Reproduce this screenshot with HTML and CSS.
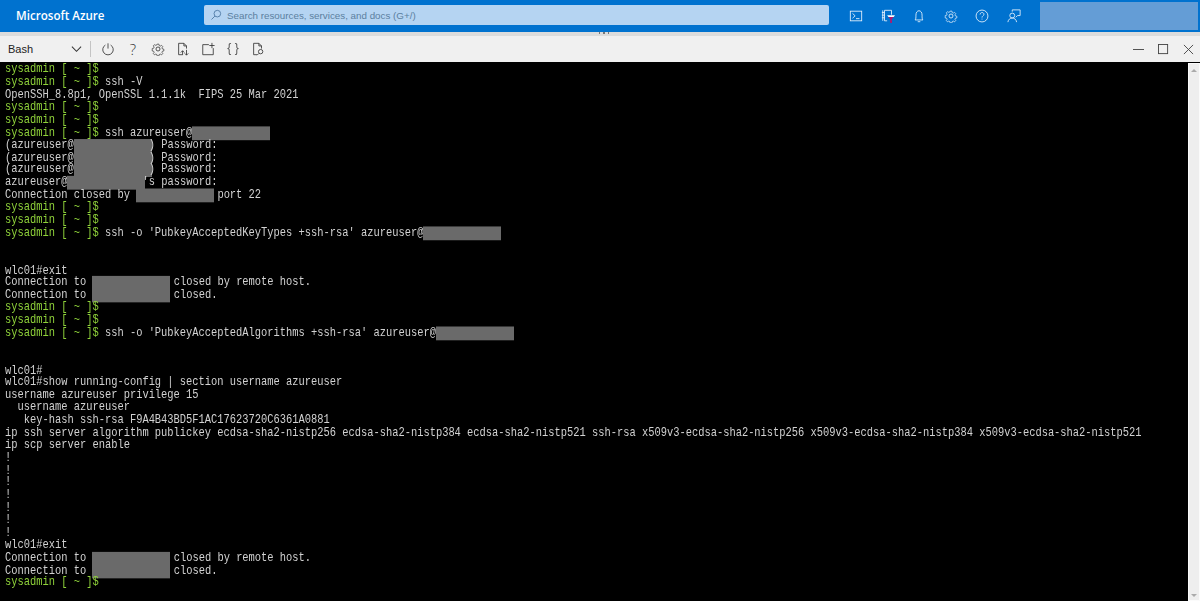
FILE: index.html
```html
<!DOCTYPE html>
<html lang="en">
<head>
<meta charset="utf-8">
<title>Microsoft Azure</title>
<link rel="stylesheet" href="styles.css">
</head>
<body>
<header class="topbar">
  <div class="brand">Microsoft Azure</div>
  <div class="search">
    <svg class="search-icon" viewBox="0 0 16 16"><circle cx="9.8" cy="6.2" r="4.4"/><path d="M6.6 9.4 2 14"/></svg>
    <span>Search resources, services, and docs (G+/)</span>
  </div>
  <nav class="top-icons">
    <svg class="ti" viewBox="0 0 16 16"><rect x="1.5" y="2.500" width="13" height="11"/><path d="M4 5l3 2.800L4 10.500M8 11h4"/></svg>
    <svg class="ti" viewBox="0 0 16 16"><path d="M4 1.500h8v5M7 13.500H4v-12M2 1.500v12M1 4h3M1 7h3M1 10h3"/><path class="funnel-top" d="M7 7h9l-1.500 2h-6z"/><path class="funnel" d="M8.500 9h6l-2 2.500V16h-2v-4.500z"/></svg>
    <svg class="ti" viewBox="0 0 16 16"><path d="M3.500 12.500c1-1 1-2.500 1-5.500s1.500-5 3.500-5 3.500 2 3.500 5 0 4.500 1 5.500zM6.500 14.500h3"/></svg>
    <svg class="ti" viewBox="0 0 16 16"><path d="M6.800 1.500h2.400l.4 2 1.500.7 1.800-1 1.600 1.700-1.100 1.700.6 1.500 2 .4v2.400l-2 .4-.6 1.500 1.100 1.700-1.600 1.700-1.800-1-1.500.6-.4 2H6.800l-.4-2-1.500-.6-1.800 1-1.600-1.700 1.100-1.700-.6-1.500-2-.4V7.500l2-.4.600-1.500-1.100-1.700 1.600-1.700 1.800 1 1.500-.7z" transform="translate(1.400 1.200) scale(.83)"/><circle cx="8" cy="8" r="2.300"/></svg>
    <svg class="ti" viewBox="0 0 16 16"><circle cx="8" cy="8" r="6.800"/><path d="M5.800 6.300c0-3 4.400-3 4.400-.2 0 1.800-2.200 1.700-2.200 3.700M8 11v1"/></svg>
    <svg class="ti" viewBox="0 0 16 16"><circle cx="6" cy="7.500" r="2.800"/><path d="M1 15c.5-3 2.500-4.700 5-4.700s4.500 1.700 5 4.700M6 3V1h9v6.500h-3l-2 2"/></svg>
  </nav>
  <div class="account"></div>
</header>
<div class="divider"><div class="grip"><i></i><i></i><i></i></div></div>
<div class="toolbar">
  <div class="shell-select">
    <span>Bash</span>
    <svg class="chev" viewBox="0 0 12 8"><path d="M1 1.500l5 5 5-5"/></svg>
  </div>
  <div class="sep"></div>
  <div class="tools">
    <svg class="tool" viewBox="0 0 16 16"><path d="M5 3.500a6 6 0 1 0 6 0M8 1.500v6"/></svg>
    <span class="tool q">?</span>
    <svg class="tool" viewBox="0 0 16 16"><path d="M6.800 1.500h2.400l.4 2 1.500.7 1.800-1 1.600 1.700-1.100 1.700.6 1.500 2 .4v2.400l-2 .4-.6 1.500 1.100 1.700-1.600 1.700-1.800-1-1.500.6-.4 2H6.800l-.4-2-1.500-.6-1.800 1-1.600-1.700 1.100-1.700-.6-1.500-2-.4V7.500l2-.4.600-1.500-1.100-1.700 1.600-1.700 1.800 1 1.500-.7z" transform="translate(1.400 1.200) scale(.83)"/><circle cx="8" cy="8" r="2.300"/></svg>
    <svg class="tool" viewBox="0 0 16 16"><path d="M7 14.500H3v-13h6l3 3v3M9 1.500v3h3M12 9v6M10 13l2 2 2-2M7.500 15v-5M5.500 12l2-2 2 2"/></svg>
    <svg class="tool" viewBox="0 0 16 16"><path d="M9 3H2v11.500h12V7M12.500 1v6M9.500 4h6"/></svg>
    <span class="tool brace">{ }</span>
    <svg class="tool" viewBox="0 0 16 16"><path d="M7 14.500H3v-13h6l3 3v3M9 1.500v3h3"/><circle cx="11" cy="11" r="2.500"/><path d="M9 13l-2 2"/></svg>
  </div>
  <div class="win-controls">
    <svg class="win" viewBox="0 0 12 12"><path d="M0 6h12"/></svg>
    <svg class="win" viewBox="0 0 12 12"><rect x=".5" y=".5" width="10" height="10"/></svg>
    <svg class="win" viewBox="0 0 12 12"><path d="M1 1l10 10M11 1 1 11"/></svg>
  </div>
</div>
<main class="terminal">
  <pre class="output"><span class="p">sysadmin [ ~ ]$</span>
<span class="p">sysadmin [ ~ ]$</span> ssh -V
OpenSSH_8.8p1, OpenSSL 1.1.1k  FIPS 25 Mar 2021
<span class="p">sysadmin [ ~ ]$</span>
<span class="p">sysadmin [ ~ ]$</span>
<span class="p">sysadmin [ ~ ]$</span> ssh azureuser@<span class="r"></span>
(azureuser@<span class="r"></span>) Password:
(azureuser@<span class="r"></span>) Password:
(azureuser@<span class="r"></span>) Password:
azureuser@<span class="r"></span>'s password:
Connection closed by <span class="r"></span> port 22
<span class="p">sysadmin [ ~ ]$</span>
<span class="p">sysadmin [ ~ ]$</span>
<span class="p">sysadmin [ ~ ]$</span> ssh -o 'PubkeyAcceptedKeyTypes +ssh-rsa' azureuser@<span class="r"></span>


wlc01#exit
Connection to <span class="r"></span> closed by remote host.
Connection to <span class="r"></span> closed.
<span class="p">sysadmin [ ~ ]$</span>
<span class="p">sysadmin [ ~ ]$</span>
<span class="p">sysadmin [ ~ ]$</span> ssh -o 'PubkeyAcceptedAlgorithms +ssh-rsa' azureuser@<span class="r"></span>


wlc01#
wlc01#show running-config | section username azureuser
username azureuser privilege 15
  username azureuser
   key-hash ssh-rsa F9A4B43BD5F1AC17623720C6361A0881
ip ssh server algorithm publickey ecdsa-sha2-nistp256 ecdsa-sha2-nistp384 ecdsa-sha2-nistp521 ssh-rsa x509v3-ecdsa-sha2-nistp256 x509v3-ecdsa-sha2-nistp384 x509v3-ecdsa-sha2-nistp521
ip scp server enable
!
!
!
!
!
!
!
wlc01#exit
Connection to <span class="r"></span> closed by remote host.
Connection to <span class="r"></span> closed.
<span class="p">sysadmin [ ~ ]$</span></pre>
  <div class="scrollbar"><div class="arrow up"></div><div class="arrow down"></div></div>
</main>
</body>
</html>
```
FILE: styles.css
```css
* { box-sizing: border-box; }
html, body { margin: 0; height: 100%; overflow: hidden; }
body { font-family: "Liberation Sans", Arial, sans-serif; background: #000; display: flex; flex-direction: column; }

.topbar { height: 32px; flex: none; background: #0072cf; display: flex; align-items: center; color: #fff; padding-bottom: 1px; }
.brand { width: 204px; padding-left: 16px; font: 600 11.600px "Open Sans", sans-serif; }
.search { width: 625px; height: 20px; margin-top: -1px; background: #b5d4f2; border-radius: 2px; display: flex; align-items: center; padding-left: 6px; gap: 5px; font-size: 9.800px; color: #5b7f9f; }
.search-icon { width: 12px; height: 12px; fill: none; stroke: #4f7aa5; stroke-width: 1.200; }
.top-icons { display: flex; margin-left: 20px; gap: 17.500px; }
.ti { width: 14px; height: 14px; fill: none; stroke: #e4f0fb; stroke-width: 1; }
.funnel-top { fill: #fff; stroke: none; }
.funnel { fill: #b3196e; stroke: none; }
.account { width: 158px; height: 28px; margin-left: 19.500px; background: #649dd6; }

.divider { height: 4px; flex: none; background: #dcdcdc; position: relative; }
.grip { position: absolute; left: 598.500px; top: 0; display: flex; gap: 3px; }
.grip i { width: 1.500px; height: 2px; background: #777; }

.toolbar { height: 25.500px; flex: none; background: #f0f0f0; display: flex; align-items: center; color: #222; }
.shell-select { width: 90px; display: flex; align-items: center; justify-content: space-between; padding: 0 8px 0 8px; font-size: 11px; }
.chev { width: 11px; height: 8px; fill: none; stroke: #333; stroke-width: 1.100; }
.sep { width: 1px; height: 16px; background: #c4c4c4; }
.tools { display: flex; align-items: center; margin-left: 10px; gap: 11px; flex: 1; }
.tool { width: 14px; height: 14px; fill: none; stroke: #333; stroke-width: .95; text-align: center; }
.q { font: 300 15px/14px "Open Sans", sans-serif; color: #333; }
.brace { font: 12px/13px "Liberation Sans", sans-serif; white-space: pre; color: #555; will-change: transform; }
.win-controls { display: flex; gap: 14px; padding: 1px 6px 0 0; }
.win { width: 11px; height: 11px; fill: none; stroke: #444; stroke-width: 1; }

.terminal { flex: 1; min-height: 0; background: #000; display: flex; position: relative; }
.output { flex: 1; margin: 0; padding: 1.400px 0 0 5px; font-family: "Liberation Mono", monospace; font-size: 10.420px; line-height: 10.880px; color: #d2d2d2; overflow: hidden; white-space: pre; transform: scaleY(1.150); transform-origin: 0 0; height: 86.900%; will-change: transform; }
.p { color: #8fd23a; }
.r { display: inline-block; width: 78px; height: 12px; margin: 0 -3px -1.120px 0; vertical-align: top; background: #6a6a6a; }
.scrollbar { width: 12px; margin-top: 1px; background: #eee; border: 1px solid #fbfbfb; position: relative; display: flex; flex-direction: column; justify-content: space-between; padding: 5px 0 3px; }
.arrow { width: 0; margin: 0 auto; border: 3px solid transparent; }
.up { border-top: 0; border-bottom-color: #aaa; }
.down { border-bottom: 0; border-top-color: #aaa; }
```
